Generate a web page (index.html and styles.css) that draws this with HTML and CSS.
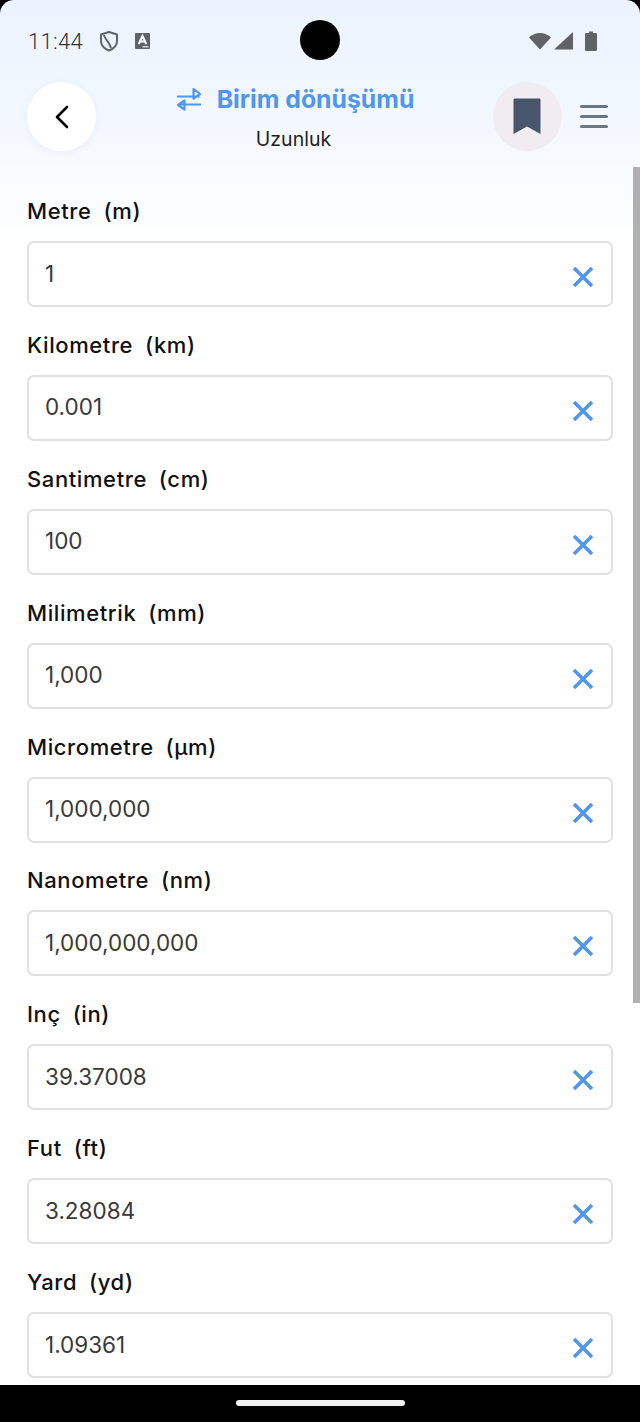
FILE: index.html
```html
<!DOCTYPE html>
<html lang="en">

<head>
  <meta charset="UTF-8">
  <meta name="viewport" content="width=device-width, initial-scale=1.0">
  <title>Birim dönüşümü</title>
  <link rel="stylesheet" href="styles.css">
</head>

<body>
  <div class="screen">
    <div class="statusBar">
      <span class="time">11:44</span>
      <svg class="shieldIcon" width="20" height="22" viewBox="0 0 20 22">
        <path d="M10 2 L18 4.5 V11 C18 15.5 14.5 18.8 10 20.5 C5.5 18.8 2 15.5 2 11 V4.5 Z M5 5 C5.5 9 10 11 12 18" fill="none" stroke="#5f6368" stroke-width="2" stroke-linejoin="round"/>
      </svg>
      <svg class="keyIcon" width="15" height="16" viewBox="0 0 15 16">
        <rect width="15" height="16" rx="1" fill="#5f6368"/>
        <path d="M3.8 11 L7.5 3 L11.2 11 M5.2 8.6 H9.8" fill="none" stroke="#fff" stroke-width="2"/>
        <rect x="7.5" y="13" width="6" height="1.5" fill="#d5d5d5"/>
      </svg>
      <div class="camera"></div>
      <div class="statusRight">
        <svg width="22" height="20" viewBox="0 0 22 20">
          <path d="M0 6.5 C6 0.5 16 0.5 22 6.5 L11 18.5 Z" fill="#5f6368"/>
        </svg>
        <svg width="19" height="20" viewBox="0 0 19 20">
          <path d="M0 18.5 L19 1 V18.5 Z" fill="#5f6368"/>
        </svg>
        <svg class="battery" width="12" height="20" viewBox="0 0 12 20">
          <path d="M4 0.5 H8 V2 H10.5 C11.4 2 12 2.6 12 3.5 V18.5 C12 19.4 11.4 20 10.5 20 H1.5 C0.6 20 0 19.4 0 18.5 V3.5 C0 2.6 0.6 2 1.5 2 H4 Z" fill="#5f6368"/>
        </svg>
      </div>
    </div>

    <header class="topBar">
      <button class="roundBtn backBtn">
        <svg width="20" height="26" viewBox="0 0 20 26">
          <path d="M16 3 L6 13 L16 23" fill="none" stroke="#000" stroke-width="2.6" stroke-linecap="round" stroke-linejoin="round" transform="translate(-1 0)"/>
        </svg>
      </button>
      <div class="titleBlock">
        <div class="titleRow">
          <svg width="26" height="26" viewBox="0 0 26 26">
            <path d="M1 10.5 H23.5 M17.5 3 L24 8 L17.5 12.5 Z M25 18.5 H3 M8.5 14.5 L2 19 L8.5 23.5 Z" fill="none" stroke="#5096ec" stroke-width="2.2" stroke-linejoin="round"/>
          </svg>
          <h1>Birim dönüşümü</h1>
        </div>
        <p class="subtitle">Uzunluk</p>
      </div>
      <button class="roundBtn bookmarkBtn">
        <svg width="28" height="37" viewBox="0 0 28 37">
          <path d="M2 0.5 H26 C27 0.5 27.5 1 27.5 2 V36 L14 28.5 L0.5 36 V2 C0.5 1 1 0.5 2 0.5 Z" fill="#47566b"/>
        </svg>
      </button>
      <div class="menuIcon"><span></span><span></span><span></span></div>
    </header>

    <main class="unitList">
      <div class="unitField">
        <label>Metre&nbsp; (m)</label>
        <div class="inputBox"><span>1</span><svg class="clearIcon" width="22" height="22" viewBox="0 0 22 22"><path d="M2 2 L20 20 M20 2 L2 20"/></svg></div>
      </div>
      <div class="unitField">
        <label>Kilometre&nbsp; (km)</label>
        <div class="inputBox"><span>0.001</span><svg class="clearIcon" width="22" height="22" viewBox="0 0 22 22"><path d="M2 2 L20 20 M20 2 L2 20"/></svg></div>
      </div>
      <div class="unitField">
        <label>Santimetre&nbsp; (cm)</label>
        <div class="inputBox"><span>100</span><svg class="clearIcon" width="22" height="22" viewBox="0 0 22 22"><path d="M2 2 L20 20 M20 2 L2 20"/></svg></div>
      </div>
      <div class="unitField">
        <label>Milimetrik&nbsp; (mm)</label>
        <div class="inputBox"><span>1,000</span><svg class="clearIcon" width="22" height="22" viewBox="0 0 22 22"><path d="M2 2 L20 20 M20 2 L2 20"/></svg></div>
      </div>
      <div class="unitField">
        <label>Micrometre&nbsp; (µm)</label>
        <div class="inputBox"><span>1,000,000</span><svg class="clearIcon" width="22" height="22" viewBox="0 0 22 22"><path d="M2 2 L20 20 M20 2 L2 20"/></svg></div>
      </div>
      <div class="unitField">
        <label>Nanometre&nbsp; (nm)</label>
        <div class="inputBox"><span>1,000,000,000</span><svg class="clearIcon" width="22" height="22" viewBox="0 0 22 22"><path d="M2 2 L20 20 M20 2 L2 20"/></svg></div>
      </div>
      <div class="unitField">
        <label>Inç&nbsp; (in)</label>
        <div class="inputBox"><span>39.37008</span><svg class="clearIcon" width="22" height="22" viewBox="0 0 22 22"><path d="M2 2 L20 20 M20 2 L2 20"/></svg></div>
      </div>
      <div class="unitField">
        <label>Fut&nbsp; (ft)</label>
        <div class="inputBox"><span>3.28084</span><svg class="clearIcon" width="22" height="22" viewBox="0 0 22 22"><path d="M2 2 L20 20 M20 2 L2 20"/></svg></div>
      </div>
      <div class="unitField">
        <label>Yard&nbsp; (yd)</label>
        <div class="inputBox"><span>1.09361</span><svg class="clearIcon" width="22" height="22" viewBox="0 0 22 22"><path d="M2 2 L20 20 M20 2 L2 20"/></svg></div>
      </div>
    </main>

    <div class="scrollThumb"></div>
  </div>

  <div class="navBar"><div class="homePill"></div></div>
</body>

</html>
```

FILE: styles.css
```css
html,
body {
  margin: 0;
  padding: 0;
  height: 1422px;
  overflow: hidden;
  background-color: #000;
}

body {
  font-family: Inter, "Liberation Sans", sans-serif;
  display: flex;
  flex-direction: column;
}

.screen {
  position: relative;
  height: 1385px;
  overflow: hidden;
  border-radius: 14px 14px 0 0;
  background: linear-gradient(#ebf3fe 0, #f3f8fe 120px, #fafcff 190px, #fcfdff 228px, #fff 232px);
}

/* Status bar */
.statusBar {
  position: relative;
  display: flex;
  align-items: center;
  height: 82px;
  padding: 0 43px 0 28px;
  box-sizing: border-box;
}

.time {
  font-family: Roboto, sans-serif;
  font-size: 22px;
  font-weight: 300;
  letter-spacing: 0.3px;
  color: #333;
  width: 71px;
}

.keyIcon {
  margin-left: 16px;
}

.camera {
  position: absolute;
  left: 300px;
  top: 20px;
  width: 40px;
  height: 40px;
  border-radius: 50%;
  background-color: #000;
}

.statusRight {
  margin-left: auto;
  display: flex;
  align-items: center;
  gap: 3px;
}

.battery {
  margin-left: 9px;
}

/* Top bar */
.topBar {
  display: flex;
  align-items: flex-start;
  height: 109px;
  padding-left: 27px;
}

.roundBtn {
  display: flex;
  align-items: center;
  justify-content: center;
  flex: none;
  width: 69px;
  height: 69px;
  padding: 0;
  border: none;
  border-radius: 50%;
}

.backBtn {
  background-color: #fff;
  box-shadow: 0 2px 10px rgba(30, 60, 110, 0.05);
}

.bookmarkBtn {
  background-color: #f1ecf0;
  padding-right: 2px;
}

.titleBlock {
  width: 395px;
  text-align: center;
  padding-right: 2px;
}

.titleRow {
  display: flex;
  align-items: center;
  justify-content: center;
  gap: 15px;
  height: 34px;
  padding-left: 3px;
}

h1 {
  margin: 0;
  font-size: 24.8px;
  font-weight: 700;
  color: #5096ec;
}

.subtitle {
  margin: 10px 0 0;
  font-size: 19.5px;
  line-height: 26px;
  color: #222;
}

.menuIcon {
  display: flex;
  flex-direction: column;
  gap: 7px;
  margin: 23px 0 0 18px;
}

.menuIcon span {
  display: block;
  width: 28px;
  height: 3px;
  border-radius: 1.5px;
  background-color: #6b7686;
}

/* Unit fields */
.unitList {
  padding: 0 27px;
}

.unitField {
  height: 133.9px;
}

.unitField label {
  display: block;
  height: 50px;
  font-size: 22px;
  font-weight: 500;
  line-height: 40px;
  letter-spacing: 0.6px;
  word-spacing: -0.5px;
  color: #111;
}

.inputBox {
  display: flex;
  align-items: center;
  justify-content: space-between;
  box-sizing: border-box;
  height: 66px;
  padding: 0 17px 0 16px;
  background-color: #fff;
  border: 2px solid #e0e0e0;
  border-radius: 7px;
  font-size: 22.5px;
  color: #3a3a3a;
}

.inputBox span {
  margin-top: -2px;
}

.clearIcon {
  margin-top: 6px;
}

.clearIcon path {
  fill: none;
  stroke: #5096ec;
  stroke-width: 3.6;
}

.scrollThumb {
  position: absolute;
  top: 167px;
  right: 0;
  width: 7px;
  height: 836px;
  background-color: #b0b0b0;
}

/* Navigation bar */
.navBar {
  flex: 1;
  display: flex;
  justify-content: center;
  padding-top: 15px;
  background-color: #000;
  border-top: 1px solid #e8e8e8;
  margin-top: -1px;
}

.homePill {
  width: 169px;
  height: 6px;
  border-radius: 3px;
  background-color: #f2f2f2;
}
```
